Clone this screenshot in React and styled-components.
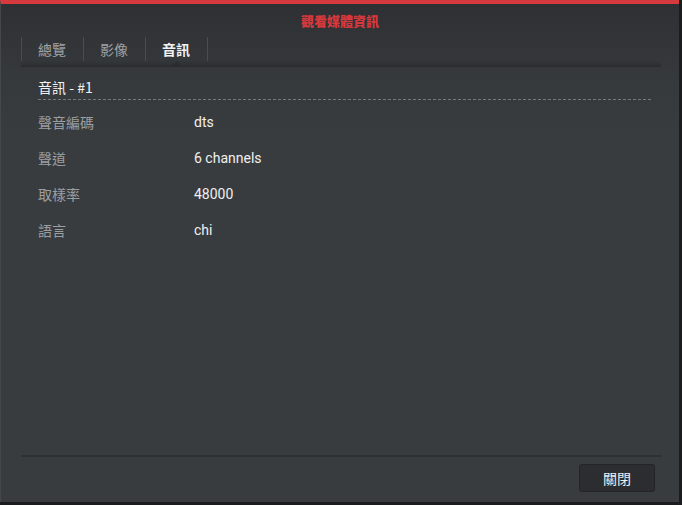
import React from 'react';
import styled, { createGlobalStyle } from 'styled-components';

const GlobalStyle = createGlobalStyle`
  html, body {
    margin: 0;
    padding: 0;
    background: #1b1c1e;
  }
  body {
    font-family: Roboto, "Noto Sans CJK TC", "Liberation Sans", sans-serif;
  }
`;

const Dialog = styled.div`
  width: 679px;
  height: 502px;
  box-sizing: border-box;
  display: flex;
  flex-direction: column;
  border-top: 4px solid #d63a3e;
  border-left: 1px solid #45484b;
  background: linear-gradient(to bottom, #2e3034 0px, #36393c 70px, #393c3f 130px, #393c3f 100%);
`;

const Title = styled.div`
  height: 33px;
  line-height: 33px;
  text-align: center;
  font-family: "Noto Sans CJK TC", sans-serif;
  font-size: 13px;
  font-weight: 900;
  color: #d7383c;
`;

const Body = styled.div`
  flex: 1;
  display: flex;
  flex-direction: column;
  padding: 0 18px 0 20px;
`;

const TabBar = styled.div`
  position: relative;
  display: flex;
  align-items: flex-start;
  height: 29px;
  border-bottom: 1px solid #2a2c2f;
  background: linear-gradient(
    to bottom,
    transparent 24px,
    rgba(0, 0, 0, 0.02) 24px,
    rgba(0, 0, 0, 0.16) 100%
  );
`;

const Tab = styled.div`
  position: relative;
  height: 24px;
  padding: 0 17px 0 16px;
  display: flex;
  align-items: center;
  border-left: 1px solid #4a4d50;
  font-family: "Noto Sans CJK TC", sans-serif;
  font-size: 14px;
  font-weight: ${({ active }) => (active ? 700 : 400)};
  color: ${({ active }) => (active ? '#f2f2f2' : '#a0a2a4')};
  &:last-child {
    border-right: 1px solid #4a4d50;
  }
  ${({ active }) =>
    active &&
    `
    &::after {
      content: '';
      position: absolute;
      left: 50%;
      top: 24px;
      margin-left: -6px;
      border-left: 6px solid transparent;
      border-right: 6px solid transparent;
      border-bottom: 6px solid #2a2c2f;
    }
  `}
`;

const Content = styled.div`
  flex: 1;
  padding: 12px 10px 0 17px;
`;

const SectionTitle = styled.div`
  line-height: 16px;
  padding-bottom: 4px;
  border-bottom: 1px dashed #76797c;
  font-family: "Noto Sans CJK TC", sans-serif;
  font-size: 14px;
  font-weight: 400;
  color: #f2f2f2;
`;

const InfoList = styled.div`
  padding-top: 4px;
`;

const Row = styled.div`
  display: flex;
  align-items: center;
  height: 36px;
`;

const Label = styled.div`
  width: 156px;
  font-family: "Noto Sans CJK TC", sans-serif;
  font-size: 14px;
  color: #9c9ea0;
`;

const Value = styled.div`
  font-family: Roboto, "Noto Sans CJK TC", sans-serif;
  font-size: 14px;
  font-weight: 400;
  color: #f0f0f0;
`;

const Footer = styled.div`
  height: 47px;
  box-sizing: border-box;
  margin: 0 18px 0 20px;
  border-top: 2px solid #2d2f32;
  display: flex;
  justify-content: flex-end;
  padding: 7px 6px 0 0;
`;

const Button = styled.button`
  width: 76px;
  height: 28px;
  border: 1px solid #232427;
  border-radius: 3px;
  background: #2b2d30;
  color: #f0f0f0;
  font-family: "Noto Sans CJK TC", sans-serif;
  font-size: 14px;
  cursor: pointer;
`;

const rows = [
  { label: '聲音編碼', value: 'dts' },
  { label: '聲道', value: '6 channels' },
  { label: '取樣率', value: '48000' },
  { label: '語言', value: 'chi' },
];

export default function App() {
  return (
    <>
      <GlobalStyle />
      <Dialog>
        <Title>觀看媒體資訊</Title>
        <Body>
          <TabBar>
            <Tab>總覽</Tab>
            <Tab>影像</Tab>
            <Tab active>音訊</Tab>
          </TabBar>
          <Content>
            <SectionTitle>音訊 - #1</SectionTitle>
            <InfoList>
              {rows.map((r) => (
                <Row key={r.label}>
                  <Label>{r.label}</Label>
                  <Value>{r.value}</Value>
                </Row>
              ))}
            </InfoList>
          </Content>
        </Body>
        <Footer>
          <Button>關閉</Button>
        </Footer>
      </Dialog>
    </>
  );
}
